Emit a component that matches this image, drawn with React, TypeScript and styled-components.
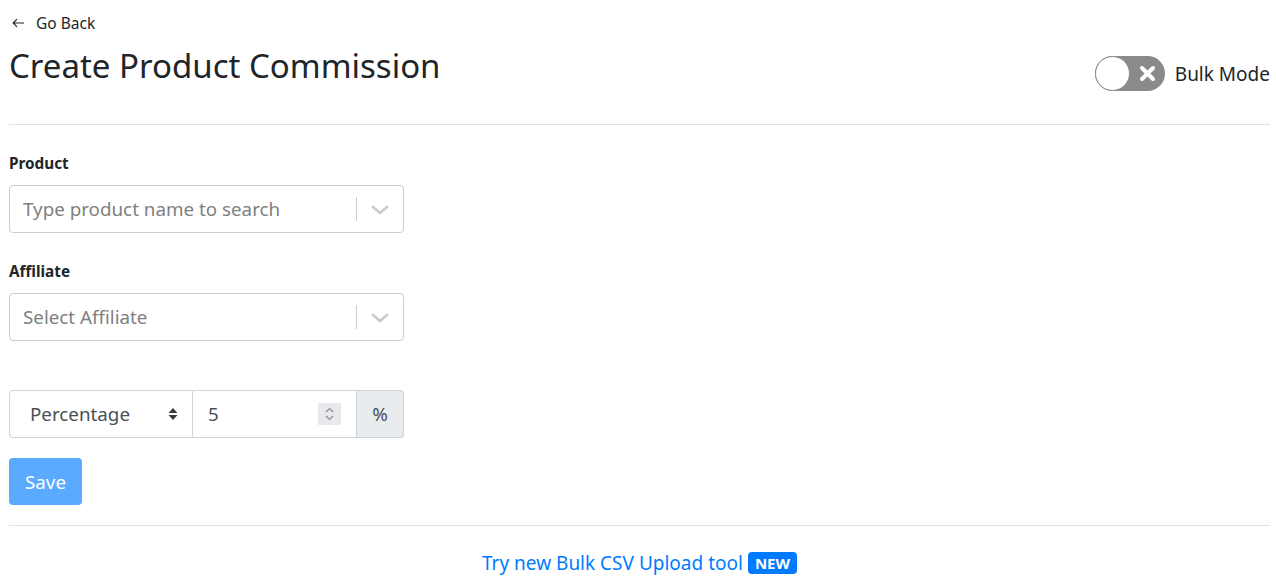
import React from "react";
import styled, { createGlobalStyle } from "styled-components";

const Global = createGlobalStyle`
  html, body { margin: 0; padding: 0; background: #fff; }
  body { font-family: "Noto Sans", "Open Sans", sans-serif; color: #212529; }
  * { box-sizing: border-box; }
`;

const Page = styled.div`
  padding: 0 6px 0 9px;
  width: 1276px;
`;

const BackLink = styled.a`
  display: flex;
  align-items: center;
  gap: 11px;
  height: 45px;
  padding-left: 3px;
  font-size: 15.5px;
  color: #212529;
  text-decoration: none;
`;

const Header = styled.div`
  display: flex;
  justify-content: space-between;
  align-items: flex-start;
  height: 79px;
`;

const Title = styled.h1`
  margin: 0;
  font-size: 33px;
  font-weight: 400;
  line-height: 42px;
`;

const BulkToggle = styled.label`
  display: flex;
  align-items: center;
  gap: 10px;
  margin-top: 11px;
  font-size: 19px;
`;

const Track = styled.span`
  position: relative;
  display: inline-flex;
  align-items: center;
  justify-content: flex-end;
  width: 70px;
  height: 35px;
  border-radius: 18px;
  background: #8a8a8a;
  padding-right: 9px;
`;

const Knob = styled.span`
  position: absolute;
  left: 0;
  top: 0;
  width: 35px;
  height: 35px;
  border-radius: 50%;
  background: #fff;
  border: 1px solid #8a8a8a;
`;

const Divider = styled.hr`
  margin: 0;
  border: 0;
  border-top: 1px solid #e2e2e2;
`;

const Form = styled.div`
  width: 395px;
  padding-top: 27px;
`;

const Label = styled.div`
  font-size: 15.3px;
  font-weight: 700;
  line-height: 22px;
  margin-bottom: 11px;
`;

const Field = styled.div<{ $mb: number }>`
  margin-bottom: ${(p) => p.$mb}px;
`;

const SelectBox = styled.div`
  display: flex;
  align-items: center;
  height: 48px;
  border: 1px solid #ccc;
  border-radius: 4px;
  background: #fff;
`;

const Placeholder = styled.div`
  flex: 1;
  padding-left: 13px;
  font-size: 18.8px;
  color: #808080;
`;

const Sep = styled.span`
  width: 1px;
  height: 24px;
  background: #ccc;
`;

const Chevron = styled.span`
  display: flex;
  width: 46px;
  justify-content: center;
  align-items: center;
  padding-top: 2px;
`;

const Group = styled.div`
  display: flex;
  height: 48px;
  margin-top: 49px;
`;

const TypeSelect = styled.div`
  display: flex;
  align-items: center;
  justify-content: space-between;
  width: 184px;
  border: 1px solid #ced4da;
  border-radius: 4px 0 0 4px;
  padding: 0 14px 0 20px;
  font-size: 18.8px;
  color: #495057;
`;

const NumberInput = styled.div`
  display: flex;
  align-items: center;
  justify-content: space-between;
  width: 164px;
  border: 1px solid #ced4da;
  border-left: 0;
  padding: 0 15px 0 15px;
  font-size: 18.8px;
  color: #495057;
`;

const Spinner = styled.span`
  display: flex;
  align-items: center;
  justify-content: center;
  width: 23px;
  height: 22px;
  background: #e9e9ed;
`;

const Addon = styled.div`
  flex: 1;
  display: flex;
  align-items: center;
  justify-content: center;
  background: #e9ecef;
  border: 1px solid #ced4da;
  border-left: 0;
  border-radius: 0 4px 4px 0;
  font-size: 18.8px;
  color: #495057;
`;

const SaveButton = styled.button`
  margin: 20px 0 20px;
  width: 73px;
  height: 47px;
  border: 0;
  border-radius: 4px;
  background: #5aabff;
  color: #fff;
  font-family: inherit;
  font-size: 18.8px;
  padding: 0;
`;

const Footer = styled.div`
  display: flex;
  justify-content: center;
  align-items: center;
  gap: 5px;
  padding-top: 24px;
  font-size: 19px;
  color: #007bff;
`;

const Badge = styled.span`
  display: inline-flex;
  align-items: center;
  height: 22px;
  padding: 0 7px;
  border-radius: 4px;
  background: #007bff;
  color: #fff;
  font-size: 15px;
  font-weight: 700;
`;

const Chev = () => (
  <svg width="18" height="10" viewBox="0 0 18 10">
    <path d="M2 2L9 8 16 2" stroke="#cccccc" strokeWidth="2.8" strokeLinecap="round" strokeLinejoin="round" fill="none" />
  </svg>
);

export default function App() {
  return (
    <>
      <Global />
      <Page>
        <BackLink href="#">
          <svg width="13" height="10" viewBox="0 0 13 10">
            <path d="M12 5H1.5M5 1.2L1.2 5 5 8.8" stroke="#212529" strokeWidth="1.2" fill="none" />
          </svg>
          Go Back
        </BackLink>
        <Header>
          <Title>Create Product Commission</Title>
          <BulkToggle>
            <Track>
              <Knob />
              <svg width="17" height="17" viewBox="0 0 17 17">
                <path d="M3 3L14 14M14 3L3 14" stroke="#fff" strokeWidth="4" strokeLinecap="round" />
              </svg>
            </Track>
            Bulk Mode
          </BulkToggle>
        </Header>
        <Divider />
        <Form>
          <Field $mb={27}>
            <Label>Product</Label>
            <SelectBox>
              <Placeholder>Type product name to search</Placeholder>
              <Sep />
              <Chevron>
                <Chev />
              </Chevron>
            </SelectBox>
          </Field>
          <Field $mb={0}>
            <Label>Affiliate</Label>
            <SelectBox>
              <Placeholder>Select Affiliate</Placeholder>
              <Sep />
              <Chevron>
                <Chev />
              </Chevron>
            </SelectBox>
          </Field>
          <Group>
            <TypeSelect>
              Percentage
              <svg width="10" height="14" viewBox="0 0 10 14">
                <path d="M5 1L9.5 6H0.5Z M5 13L9.5 8H0.5Z" fill="#343a40" />
              </svg>
            </TypeSelect>
            <NumberInput>
              5
              <Spinner>
                <svg width="9" height="16" viewBox="0 0 9 16">
                  <path d="M1 6L4.5 2.5 8 6M1 10L4.5 13.5 8 10" stroke="#8a8a90" strokeWidth="1.2" fill="none" />
                </svg>
              </Spinner>
            </NumberInput>
            <Addon>%</Addon>
          </Group>
          <SaveButton>Save</SaveButton>
        </Form>
        <Divider />
        <Footer>
          Try new Bulk CSV Upload tool <Badge>NEW</Badge>
        </Footer>
      </Page>
    </>
  );
}
